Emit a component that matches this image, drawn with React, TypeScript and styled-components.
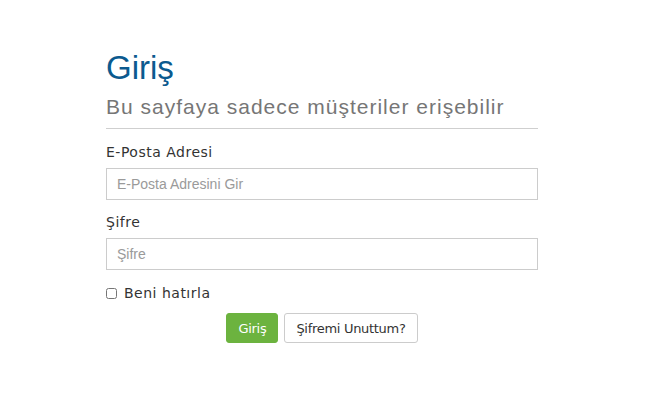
import styled, { createGlobalStyle } from "styled-components";

const GlobalStyle = createGlobalStyle`
  * {
    box-sizing: border-box;
  }

  body {
    margin: 0;
    background: #fff;
    font-family: "DejaVu Sans", Verdana, sans-serif;
  }
`;

const Page = styled.div`
  width: 650px;
  height: 402px;
  padding: 48px 0 0 106px;
`;

const Form = styled.form`
  width: 432px;
  display: flex;
  flex-direction: column;
`;

const Title = styled.h1`
  margin: 0;
  font-family: "Liberation Sans", Arial, sans-serif;
  font-size: 33px;
  font-weight: 400;
  line-height: 40px;
  color: #0b5a8f;
`;

const Subtitle = styled.h2`
  margin: 5px 0 0;
  font-family: "Liberation Sans", Arial, sans-serif;
  font-size: 21px;
  font-weight: 400;
  letter-spacing: 1px;
  line-height: 28px;
  color: #767676;
`;

const Divider = styled.hr`
  margin: 7px 0 13px;
  border: 0;
  border-top: 1px solid #cfcfcf;
`;

const Field = styled.div`
  display: flex;
  flex-direction: column;
  gap: 6px;
  margin-bottom: 12px;
`;

const Label = styled.label`
  font-size: 14px;
  line-height: 20px;
  letter-spacing: 0.5px;
  color: #333;
`;

const Input = styled.input`
  height: 32px;
  width: 100%;
  padding: 0 10px;
  border: 1px solid #cccccc;
  border-radius: 0;
  font-family: "Liberation Sans", Arial, sans-serif;
  font-size: 14px;
  color: #333;

  &::placeholder {
    color: #9a9a9a;
  }
`;

const CheckRow = styled.label`
  display: flex;
  align-items: center;
  gap: 7px;
  margin-top: 1px;
  font-size: 14px;
  line-height: 20px;
  letter-spacing: 0.5px;
  color: #333;
`;

const Check = styled.input`
  margin: 0;
  width: 11px;
  height: 11px;
`;

const Actions = styled.div`
  display: flex;
  justify-content: center;
  gap: 6px;
  margin-top: 10px;
`;

const Button = styled.button<{ $primary?: boolean }>`
  height: 30px;
  padding: 0 11px;
  border-radius: 3px;
  font-family: "DejaVu Sans", Verdana, sans-serif;
  font-size: 13px;
  letter-spacing: -0.3px;
  cursor: pointer;
  border: 1px solid ${(p) => (p.$primary ? "#6cb33f" : "#cccccc")};
  background: ${(p) => (p.$primary ? "#6cb33f" : "#fff")};
  color: ${(p) => (p.$primary ? "#fff" : "#333")};
`;

export default function App() {
  return (
    <>
      <GlobalStyle />
      <Page>
        <Form onSubmit={(e) => e.preventDefault()}>
          <Title>Giriş</Title>
          <Subtitle>Bu sayfaya sadece müşteriler erişebilir</Subtitle>
          <Divider />
          <Field>
            <Label htmlFor="email">E-Posta Adresi</Label>
            <Input id="email" type="email" placeholder="E-Posta Adresini Gir" />
          </Field>
          <Field>
            <Label htmlFor="password">Şifre</Label>
            <Input id="password" type="password" placeholder="Şifre" />
          </Field>
          <CheckRow>
            <Check type="checkbox" />
            Beni hatırla
          </CheckRow>
          <Actions>
            <Button $primary type="submit">Giriş</Button>
            <Button type="button">Şifremi Unuttum?</Button>
          </Actions>
        </Form>
      </Page>
    </>
  );
}
